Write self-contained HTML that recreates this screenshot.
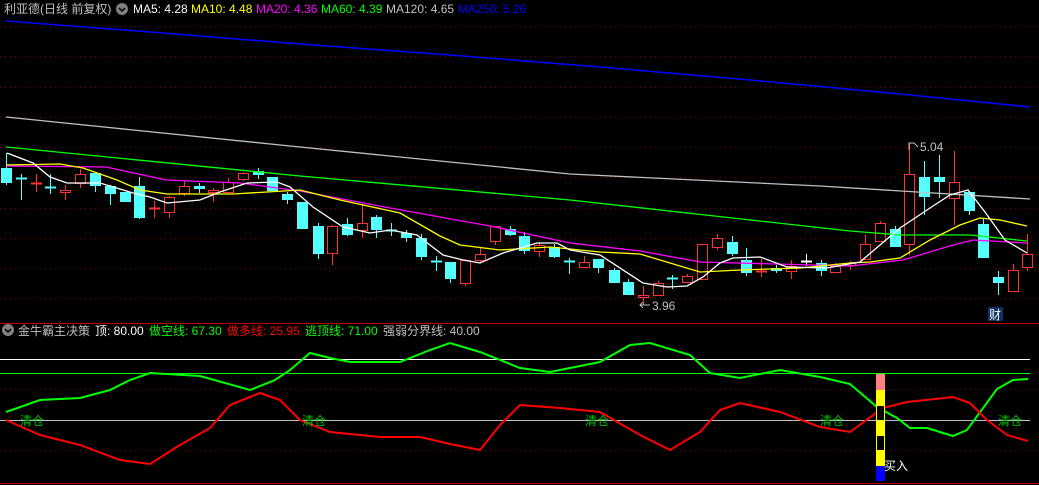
<!DOCTYPE html>
<html><head><meta charset="utf-8"><style>
html,body{margin:0;padding:0;background:#000;width:1039px;height:485px;overflow:hidden}
svg{display:block}
text{font-family:"Liberation Sans","Noto Sans CJK SC",sans-serif;font-size:12px}
</style></head><body>
<svg width="1039" height="485" xmlns="http://www.w3.org/2000/svg">
<g stroke="#800000" stroke-dasharray="1,4" stroke-width="1">
<line x1="0" y1="26.5" x2="1039" y2="26.5"/><line x1="0" y1="56.5" x2="1039" y2="56.5"/>
<line x1="0" y1="87.5" x2="1039" y2="87.5"/><line x1="0" y1="117.5" x2="1039" y2="117.5"/>
<line x1="0" y1="147.5" x2="1039" y2="147.5"/><line x1="0" y1="177.5" x2="1039" y2="177.5"/>
<line x1="0" y1="208.5" x2="1039" y2="208.5"/><line x1="0" y1="238.5" x2="1039" y2="238.5"/>
<line x1="0" y1="268.5" x2="1039" y2="268.5"/><line x1="0" y1="298.5" x2="1039" y2="298.5"/>
<line x1="0" y1="389.5" x2="1039" y2="389.5"/><line x1="0" y1="450.5" x2="1039" y2="450.5"/>
</g>
<line x1="0" y1="323.5" x2="1039" y2="323.5" stroke="#c00000"/>
<line x1="0" y1="483.5" x2="1039" y2="483.5" stroke="#c00000"/>
<g id="c"></g>
<g fill="none" stroke-width="1.3">
<polyline stroke="#0000ff" stroke-width="1.6" points="6,21 150,32 300,44 450,55 600,67 750,80 900,94 1030,107"/>
<polyline stroke="#c0c0c0" points="6,117 290,146 570,174 820,186 1030,199"/>
<polyline stroke="#00ff00" points="6,147 300,176 570,200 850,231 900,235 970,235 1027,241"/>
<polyline stroke="#ff00ff" points="6,166 106,167 166,180 240,183 300,191 390,208 490,226 570,243 640,251 700,262 850,266 903,260 953,245 973,240 1027,243"/>
<polyline stroke="#ffff00" points="6,165 60,164 83,168 117,180 140,190 167,194 233,194 267,192 300,190 340,200 400,213 440,236 460,245 500,250 550,247 570,249 600,252 640,254 680,266 700,272 740,270 800,268 850,263 870,262 900,258 930,240 960,225 980,218 1000,220 1027,226"/>
<polyline stroke="#ffffff" points="7,153 33,163 50,177 67,183 100,183 133,193 150,197 167,203 200,200 220,192 247,183 277,182 290,187 313,207 343,227 370,233 390,230 417,235 443,255 463,260 480,263 503,253 537,243 557,243 570,250 600,255 643,283 667,287 687,286 703,277 720,263 733,258 760,257 787,267 827,268 860,262 900,228 930,208 950,195 968,190 985,212 1005,240 1027,253"/>
</g>
<line x1="0" y1="359.5" x2="1030" y2="359.5" stroke="#ffffff"/>
<line x1="0" y1="373.5" x2="1030" y2="373.5" stroke="#00ff00"/>
<line x1="0" y1="420.5" x2="1030" y2="420.5" stroke="#c0c0c0"/>
<polyline fill="none" stroke="#00ff00" stroke-width="2" points="6,412 40,400 80,398 110,390 130,380 150,373 200,376 250,390 275,380 290,370 310,353 330,358 350,362 400,362 430,350 450,343 480,352 520,368 550,372 600,362 630,345 650,343 690,355 710,373 740,378 780,370 820,377 850,384 877,407 897,418 910,428 927,428 953,436 967,430 997,389 1013,380 1028,379"/>
<polyline fill="none" stroke="#ff0000" stroke-width="2" points="6,420 40,435 80,445 120,460 150,464 180,445 210,428 230,405 260,393 280,400 300,420 330,432 380,437 420,437 450,444 480,450 500,425 520,405 560,408 600,412 640,435 670,450 700,432 720,410 740,403 780,412 820,427 850,432 883,408 907,402 953,397 970,403 987,420 1007,435 1028,441"/>
<rect x="876" y="374" width="9" height="16" fill="#ff8080"/>
<rect x="876" y="390" width="9" height="76" fill="#ffff00"/>
<rect x="876" y="466" width="9" height="15" fill="#0000ff"/>
<rect x="877" y="406" width="7" height="14" fill="#000"/>
<rect x="877" y="436" width="7" height="14" fill="#000"/>
<text x="884" y="470" fill="#fff">买入</text>
<g fill="#00c000"><text x="20" y="425">清仓</text><text x="302" y="425">清仓</text><text x="585" y="425">清仓</text><text x="820" y="425">清仓</text><text x="998" y="425">清仓</text></g>
<g fill="#c0c0c0"><text x="920" y="151">5.04</text><text x="652" y="310">3.96</text></g>
<path d="M909,150 V143 H914 L918,147" stroke="#c0c0c0" fill="none"/>
<path d="M640,305 H650 M643,302 L640,305 L643,308" stroke="#c0c0c0" fill="none"/>
<rect x="988" y="307" width="15" height="14" fill="#103060"/>
<text x="989" y="319" fill="#fff">财</text>
<g><text x="4" y="13" fill="#c0c0c0">利亚德(日线 前复权)</text>
<circle cx="122" cy="9" r="6" fill="#808080"/><path d="M119,8 l3,3 l3,-3" stroke="#000" stroke-width="1.5" fill="none"/>
<text x="133" y="13" fill="#fff">MA5: 4.28</text><text x="191" y="13" fill="#ffff00">MA10: 4.48</text>
<text x="256" y="13" fill="#ff00ff">MA20: 4.36</text><text x="321" y="13" fill="#00ff00">MA60: 4.39</text>
<text x="386" y="13" fill="#c0c0c0">MA120: 4.65</text><text x="458" y="13" fill="#0000ff">MA250: 5.26</text></g>
<g><circle cx="8" cy="330" r="6" fill="#808080"/><path d="M5,329 l3,3 l3,-3" stroke="#000" stroke-width="1.5" fill="none"/>
<text x="18" y="335" fill="#c0c0c0">金牛霸主决策</text><text x="95" y="335" fill="#fff">顶: 80.00</text>
<text x="149" y="335" fill="#00ff00">做空线: 67.30</text><text x="227" y="335" fill="#ff0000">做多线: 25.95</text>
<text x="305" y="335" fill="#00ff00">逃顶线: 71.00</text><text x="383" y="335" fill="#c0c0c0">强弱分界线: 40.00</text></g>
</svg>
<script>
var d=[[6,'c',168,183,153,185],[21,'cx',178,178,174,200],[36,'rx',183,183,174,192],[50,'cx',187,187,174,194],[65,'r',190,193,185,200],[80,'r',174,184,169,188],[95,'c',173,186,173,192],[110,'c',186,194,185,205],[125,'c',192,202,192,202],[139,'c',186,218,177,219],[154,'rx',208,208,201,218],[169,'r',197,213,196,218],[184,'r',186,194,181,196],[199,'c',186,189,183,193],[213,'r',190,193,188,202],[228,'r',182,193,178,194],[243,'r',173,180,172,181],[258,'c',171,175,168,179],[272,'c',177,191,177,191],[287,'c',194,200,192,204],[302,'c',202,229,202,229],[318,'c',226,254,223,259],[332,'r',226,254,225,265],[347,'c',224,235,218,236],[362,'r',223,231,204,238],[376,'c',217,230,215,238],[391,'cx',230,230,223,236],[406,'c',233,238,230,242],[421,'c',238,257,234,260],[436,'cx',261,261,256,271],[450,'c',262,279,262,283],[465,'r',260,284,259,286],[480,'r',254,261,247,263],[495,'r',226,242,226,245],[510,'c',229,235,226,236],[524,'c',236,251,232,254],[539,'r',245,252,243,257],[554,'c',247,257,244,258],[569,'cx',261,261,258,274],[584,'r',262,268,256,268],[598,'c',259,268,259,273],[614,'c',270,283,268,283],[628,'c',282,295,279,295],[643,'r',295,298,286,305],[658,'r',283,296,281,296],[672,'cx',278,278,275,289],[687,'r',276,283,274,283],[702,'r',244,280,244,280],[717,'r',238,248,234,250],[732,'c',242,254,236,256],[746,'c',260,273,248,276],[761,'rx',271,271,259,277],[776,'c',268,271,265,273],[791,'r',266,272,260,279],[806,'wx',261,261,254,266],[821,'c',263,271,260,276],[835,'r',266,273,263,273],[850,'r',263,266,261,270],[865,'r',244,260,234,260],[880,'r',223,242,221,242],[895,'c',229,247,226,247],[909,'r',174,245,143,255],[924,'c',177,197,161,215],[939,'c',177,182,155,198],[954,'r',182,199,151,225],[969,'c',192,211,191,215],[983,'c',224,258,219,258],[998,'c',277,283,271,295],[1013,'r',270,292,264,292],[1027,'r',254,268,234,271]];
var s='';
d.forEach(function(a){var x=a[0],t=a[1],col=t[0]=='c'?'#54ffff':t[0]=='r'?'#ff3232':'#ffffff';
s+='<line x1="'+(x+.5)+'" y1="'+a[4]+'" x2="'+(x+.5)+'" y2="'+a[5]+'" stroke="'+col+'"/>';
if(t.length>1){s+='<line x1="'+(x-5)+'" y1="'+(a[2]+.5)+'" x2="'+(x+6)+'" y2="'+(a[2]+.5)+'" stroke="'+col+'" stroke-width="2"/>';}
else if(t=='c'){s+='<rect x="'+(x-5)+'" y="'+a[2]+'" width="11" height="'+(a[3]-a[2])+'" fill="'+col+'"/>';}
else{s+='<rect x="'+(x-4.5)+'" y="'+(a[2]+.5)+'" width="10" height="'+(a[3]-a[2]-1)+'" fill="#000" stroke="'+col+'"/>';}});
var g=document.getElementById('c');g.outerHTML='<g>'+s+'</g>';
</script>
</body></html>
